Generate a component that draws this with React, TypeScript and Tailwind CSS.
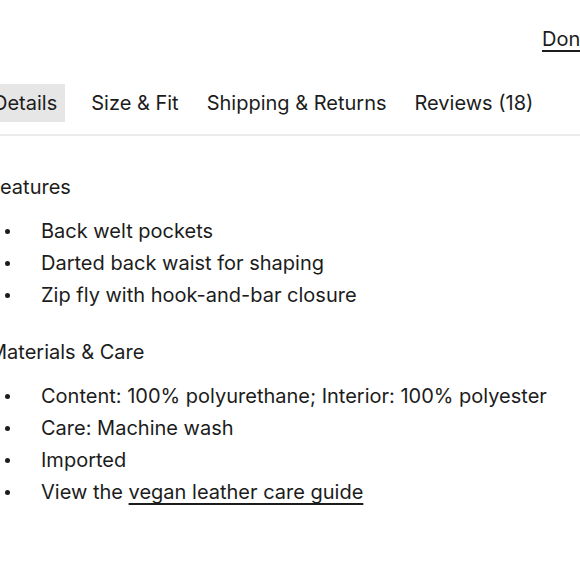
const features = [
  "Back welt pockets",
  "Darted back waist for shaping",
  "Zip fly with hook-and-bar closure",
];

const tabs = ["Details", "Size & Fit", "Shipping & Returns", "Reviews (18)"];

function Bullet({ children }: { children: React.ReactNode }) {
  return (
    <li className="flex items-center h-[32px]">
      <span className="w-[52px] pl-[16px] flex items-center">
        <span className="block w-[5px] h-[5px] rounded-full bg-[#1c1c1c]" />
      </span>
      <span>{children}</span>
    </li>
  );
}

export default function App() {
  return (
    <div
      className="w-[580px] h-[580px] overflow-hidden bg-white text-[#1c1c1c] text-[20px]"
      style={{ fontFamily: "Inter, 'Open Sans', sans-serif" }}
    >
      <div className="w-[640px] ml-[-11px]">
        {/* Header */}
        <div className="pt-[23px] h-[55px] pl-[553px]">
          <a className="underline underline-offset-[4px] leading-[32px]">Done</a>
        </div>

        {/* Tabs */}
        <div className="mt-[28px] pb-[12px] border-b-2 border-[#ebebeb]">
          <div className="flex gap-[12px] ml-[-4px]">
            {tabs.map((t, i) => (
              <button
                key={t}
                className={
                  "px-[8px] py-[8px] leading-[22px] mt-[1px] whitespace-nowrap " +
                  (i === 0 ? "bg-[#e6e6e6] mr-[6px]" : "")
                }
              >
                {t}
              </button>
            ))}
          </div>
        </div>

        {/* Content */}
        <div className="pt-[35px]">
          <h3 className="leading-[32px]">Features</h3>
          <ul className="mt-[12px]">
            {features.map((f) => (
              <Bullet key={f}>{f}</Bullet>
            ))}
          </ul>

          <h3 className="leading-[32px] mt-[25px]">Materials &amp; Care</h3>
          <ul className="mt-[12px]">
            <Bullet>Content: 100% polyurethane; Interior: 100% polyester</Bullet>
            <Bullet>Care: Machine wash</Bullet>
            <Bullet>Imported</Bullet>
            <Bullet>
              View the{" "}
              <a className="underline underline-offset-[4px]">vegan leather care guide</a>
            </Bullet>
          </ul>
        </div>
      </div>
    </div>
  );
}
